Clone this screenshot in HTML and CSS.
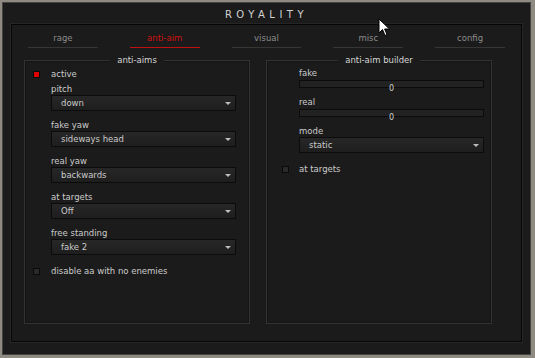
FILE: index.html
```html
<!DOCTYPE html>
<html lang="en">
<head>
    <meta charset="UTF-8">
    <title>royality</title>
    <link rel="stylesheet" href="styles.css">
</head>
<body>
    <div class="window">
        <div class="title">ROYALITY</div>

        <div class="panel">
            <div class="tabs">
                <div class="tab">rage</div>
                <div class="tab active">anti-aim</div>
                <div class="tab">visual</div>
                <div class="tab">misc</div>
                <div class="tab">config</div>
            </div>

            <div class="groups">
                <div class="group group-left">
                    <span class="group-title">anti-aims</span>

                    <div class="check-row first">
                        <span class="box on"></span>
                        <span>active</span>
                    </div>

                    <div class="label">pitch</div>
                    <div class="select"><span>down</span><i class="arrow"></i></div>

                    <div class="label">fake yaw</div>
                    <div class="select"><span>sideways head</span><i class="arrow"></i></div>

                    <div class="label">real yaw</div>
                    <div class="select"><span>backwards</span><i class="arrow"></i></div>

                    <div class="label">at targets</div>
                    <div class="select"><span>Off</span><i class="arrow"></i></div>

                    <div class="label">free standing</div>
                    <div class="select"><span>fake 2</span><i class="arrow"></i></div>

                    <div class="check-row last">
                        <span class="box"></span>
                        <span>disable aa with no enemies</span>
                    </div>
                </div>

                <div class="group group-right">
                    <span class="group-title">anti-aim builder</span>

                    <div class="label first">fake</div>
                    <div class="slider"></div>
                    <div class="slider-value">0</div>

                    <div class="label">real</div>
                    <div class="slider"></div>
                    <div class="slider-value">0</div>

                    <div class="label">mode</div>
                    <div class="select"><span>static</span><i class="arrow"></i></div>

                    <div class="check-row last">
                        <span class="box"></span>
                        <span>at targets</span>
                    </div>
                </div>
            </div>
        </div>

        <!-- mouse pointer -->
        <svg class="cursor" width="14" height="20" viewBox="0 0 14 20">
            <path d="M1 1 L1 15 L4.5 11.5 L7 17.5 L9 16.6 L6.6 11 L11.5 11 Z" fill="#fff" stroke="#000" stroke-width="1"/>
        </svg>
    </div>
</body>
</html>
```

FILE: styles.css
```css
* {
    box-sizing: border-box;
}
body {
    margin: 0;
    background: #8f8a82;
    font-family: "DejaVu Sans", Verdana, sans-serif;
    font-size: 8.5px;
    color: #cbcbcb;
}
.window {
    position: relative;
    margin: 2px 0 0 2px;
    width: 529px;
    height: 353px;
    background: #1b1b1b;
    border: 1px solid #444;
    padding: 0 8px;
}
.title {
    height: 21px;
    line-height: 24px;
    text-align: center;
    font-size: 10px;
    letter-spacing: 4.5px;
    color: #d2d2d2;
}
.panel {
    width: 511px;
    height: 318px;
    border: 1px solid #060606;
    box-shadow: 0 0 0 1px #262626;
}
.tabs {
    display: flex;
}
.tab {
    width: 102px;
    padding-top: 7px;
    text-align: center;
    line-height: 12px;
    color: #8b8b8b;
}
.tab::after {
    content: "";
    display: block;
    height: 1px;
    margin: 3px 16px 0;
    background: #363636;
}
.tab.active {
    color: #d01010;
}
.tab.active::after {
    background: #c01010;
}
.groups {
    display: flex;
    gap: 16px;
    margin: 12px 0 0 12px;
}
.group {
    position: relative;
    width: 226px;
    height: 264px;
    border: 1px solid #333;
    box-shadow: inset 0 0 0 1px #141414;
}
.group-left {
    padding-left: 26px;
}
.group-right {
    padding-left: 32px;
}
.group-title {
    position: absolute;
    top: -7px;
    left: 0;
    right: 0;
    margin: 0 auto;
    width: max-content;
    padding: 0 7px;
    background: #1b1b1b;
    line-height: 12px;
    color: #d6d6d6;
}
.label {
    line-height: 12px;
    margin-top: 8px;
}
.check-row {
    position: relative;
    line-height: 12px;
}
.check-row.first {
    margin-top: 7px;
    margin-bottom: -5px;
}
.check-row.last {
    margin-top: 10px;
}
.box {
    position: absolute;
    top: 3px;
    left: -18px;
    width: 7px;
    height: 7px;
    border: 1px solid #0a0a0a;
    background: #2a2a2a;
}
.group-right .box {
    left: -17px;
}
.box.on {
    background: #e00000;
}
.select {
    position: relative;
    width: 185px;
    height: 16px;
    line-height: 14px;
    padding-left: 9px;
    border: 1px solid #0b0b0b;
    background: linear-gradient(#272727, #1e1e1e);
}
.arrow {
    position: absolute;
    right: 4px;
    top: 6px;
    border-left: 3px solid transparent;
    border-right: 3px solid transparent;
    border-top: 3px solid #bdbdbd;
}
.group-right .label.first {
    margin-top: 7px;
}
.group-right .label {
    margin-top: 9px;
    line-height: 11px;
}
.slider {
    margin-top: 1px;
    width: 185px;
    height: 8px;
    border: 1px solid #0b0b0b;
    background: #222;
}
.slider-value {
    width: 185px;
    text-align: center;
    font-size: 8px;
    line-height: 7px;
    margin-top: -3px;
    margin-bottom: -4px;
    color: #cfcfcf;
}
.cursor {
    position: absolute;
    left: 375px;
    top: 15px;
}
```
